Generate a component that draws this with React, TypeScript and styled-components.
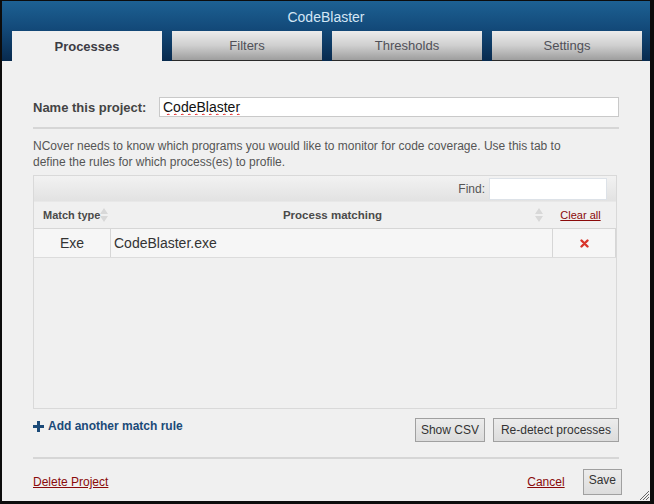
import React from 'react';
import styled, { createGlobalStyle } from 'styled-components';

const GlobalStyle = createGlobalStyle`
  html, body {
    margin: 0;
    padding: 0;
    background: #111;
  }
  body {
    font-family: 'Liberation Sans', Arial, sans-serif;
  }
`;

const tabs = ['Processes', 'Filters', 'Thresholds', 'Settings'];

export default function App() {
  return (
    <>
      <GlobalStyle />
      <Window>
        <TitleBar>
          <Title>CodeBlaster</Title>
          <TabRow>
            {tabs.map((t, i) => (
              <Tab key={t} active={i === 0}>
                {t}
              </Tab>
            ))}
          </TabRow>
        </TitleBar>
        <Content>
          <NameRow>
            <NameLabel>Name this project:</NameLabel>
            <NameInput defaultValue="CodeBlaster" />
          </NameRow>
          <Rule />
          <Intro>
            NCover needs to know which programs you would like to monitor for code coverage. Use this tab to
            <br />
            define the rules for which process(es) to profile.
          </Intro>
          <TableBox>
            <Toolbar>
              <FindLabel>Find:</FindLabel>
              <FindInput />
            </Toolbar>
            <HeadRow>
              <TypeHead>
                Match type
                <SortIcon />
              </TypeHead>
              <ProcessHead>
                Process matching
                <SortIcon />
              </ProcessHead>
              <ClearHead>
                <RedLink href="#">Clear all</RedLink>
              </ClearHead>
            </HeadRow>
            <DataRow>
              <TypeCell>Exe</TypeCell>
              <ProcessCell>CodeBlaster.exe</ProcessCell>
              <RemoveCell>
                <RemoveIcon />
              </RemoveCell>
            </DataRow>
          </TableBox>
          <ActionRow>
            <AddLink href="#">
              <PlusIcon />
              Add another match rule
            </AddLink>
            <ButtonGroup>
              <Button>Show CSV</Button>
              <Button wide>Re-detect processes</Button>
            </ButtonGroup>
          </ActionRow>
          <Rule />
          <Footer>
            <RedLink href="#" size={12}>Delete Project</RedLink>
            <FooterRight>
              <RedLink href="#" size={12}>Cancel</RedLink>
              <SaveButton>Save</SaveButton>
            </FooterRight>
          </Footer>
          <Grip />
        </Content>
      </Window>
    </>
  );
}

function SortIcon() {
  return (
    <SortSvg width="8" height="16" viewBox="0 0 8 16">
      <path d="M4 1 L8 7 L0 7 Z" fill="#d8d8d8" />
      <path d="M4 15 L8 9 L0 9 Z" fill="#d8d8d8" />
    </SortSvg>
  );
}

function RemoveIcon() {
  return (
    <svg width="9" height="9" viewBox="0 0 9 9">
      <path d="M1.5 1.5 L7.5 7.5 M7.5 1.5 L1.5 7.5" stroke="#d8342a" strokeWidth="2.4" strokeLinecap="round" />
    </svg>
  );
}

function PlusIcon() {
  return (
    <svg width="11" height="11" viewBox="0 0 11 11">
      <path d="M4 0 H7 V4 H11 V7 H7 V11 H4 V7 H0 V4 H4 Z" fill="#1b4a78" />
    </svg>
  );
}

function Grip() {
  return (
    <GripSvg width="12" height="12" viewBox="0 0 12 12">
      <path d="M11 2 L2 11 M11 5 L5 11 M11 8 L8 11" stroke="#666" strokeWidth="1" />
    </GripSvg>
  );
}

const Window = styled.div`
  width: 654px;
  height: 504px;
  box-sizing: border-box;
  border-style: solid;
  border-color: #0c0c0c;
  border-width: 1px 4px 3px 2px;
  display: flex;
  flex-direction: column;
  background: #f0f0f0;
`;

const TitleBar = styled.div`
  background: linear-gradient(#1d6193 0%, #134a7a 45%, #082a4e 100%);
  padding: 0 0 0 10px;
  display: flex;
  flex-direction: column;
`;

const Title = styled.div`
  height: 30px;
  line-height: 32px;
  text-align: center;
  color: #d4e6f5;
  font-size: 14px;
  padding-right: 10px;
`;

const TabRow = styled.div`
  display: flex;
  gap: 10px;
`;

const Tab = styled.div<{ active?: boolean }>`
  width: 150px;
  height: 30px;
  box-sizing: border-box;
  display: flex;
  align-items: center;
  justify-content: center;
  font-size: 13px;
  color: ${({ active }) => (active ? '#3c3c44' : '#505058')};
  font-weight: ${({ active }) => (active ? 'bold' : 'normal')};
  background: ${({ active }) =>
    active ? '#f0f0f0' : 'linear-gradient(#ececec 0%, #cfcfcf 50%, #9e9e9e 100%)'};
  border-bottom: ${({ active }) => (active ? 'none' : '1px solid #2a2a2a')};
`;

const Content = styled.div`
  position: relative;
  flex: 1;
  padding: 36px 31px 0 31px;
  display: flex;
  flex-direction: column;
`;

const NameRow = styled.div`
  display: flex;
  align-items: center;
  height: 20px;
`;

const NameLabel = styled.label`
  width: 126px;
  font-size: 13px;
  font-weight: bold;
  color: #444;
`;

const NameInput = styled.input`
  flex: 1;
  height: 20px;
  box-sizing: border-box;
  border: 1px solid #c9c9c9;
  background: #fff;
  padding: 0 3px;
  font-family: 'Liberation Sans', Arial, sans-serif;
  font-size: 14px;
  color: #111;
  text-decoration: underline wavy #e01010;
  text-decoration-thickness: 1px;
  outline: none;
`;

const Rule = styled.div`
  height: 0;
  border-top: 2px solid #d6d6d6;
  margin: 10px 0 0 0;
`;

const Intro = styled.p`
  margin: 9px 0 5px;
  font-size: 12px;
  line-height: 16px;
  color: #555;
`;

const TableBox = styled.div`
  height: 232px;
  margin-right: 2px;
  border: 1px solid #d9d9d9;
  background: #f0f0f0;
  display: flex;
  flex-direction: column;
`;

const Toolbar = styled.div`
  height: 25px;
  display: flex;
  align-items: center;
  justify-content: flex-end;
  padding-right: 9px;
  background: linear-gradient(#f2f2f2, #e2e2e2);
  border-bottom: 1px solid #e8e8e8;
`;

const FindLabel = styled.span`
  font-size: 12px;
  color: #555;
  margin-right: 4px;
`;

const FindInput = styled.input`
  width: 118px;
  height: 22px;
  box-sizing: border-box;
  border: 1px solid #dde2e8;
  background: #fff;
  outline: none;
`;

const HeadRow = styled.div`
  height: 26px;
  display: flex;
  align-items: center;
  border-bottom: 1px solid #d6d6d6;
  font-size: 11px;
  font-weight: bold;
  color: #4a4a4a;
`;

const TypeHead = styled.div`
  width: 76px;
  box-sizing: border-box;
  padding-left: 9px;
  display: flex;
  align-items: center;
`;

const ProcessHead = styled.div`
  flex: 1;
  position: relative;
  display: flex;
  justify-content: center;
  align-items: center;
  padding-left: 6px;
  font-size: 11.5px;
`;

const SortSvg = styled.svg`
  margin-left: 0;
  ${ProcessHead} & {
    position: absolute;
    right: 6px;
  }
`;

const ClearHead = styled.div`
  width: 63px;
  display: flex;
  justify-content: center;
  padding-right: 4px;
`;

const RedLink = styled.a<{ size?: number }>`
  color: #8a0a0a;
  font-size: ${({ size }) => size ?? 11}px;
  font-weight: normal;
  text-decoration: underline;
`;

const DataRow = styled.div`
  height: 28px;
  display: flex;
  background: #f6f6f6;
  border-bottom: 1px solid #dcdcdc;
  font-size: 14px;
  color: #333;
`;

const TypeCell = styled.div`
  width: 76px;
  display: flex;
  align-items: center;
  justify-content: center;
  border-right: 1px solid #d6d6d6;
`;

const ProcessCell = styled.div`
  flex: 1;
  display: flex;
  align-items: center;
  padding-left: 3px;
`;

const RemoveCell = styled.div`
  width: 62px;
  display: flex;
  align-items: center;
  justify-content: center;
  border-left: 1px solid #d6d6d6;
  border-right: 1px solid #d6d6d6;
`;

const ActionRow = styled.div`
  display: flex;
  align-items: flex-start;
  justify-content: space-between;
  margin-top: 9px;
  height: 23px;
  margin-bottom: 6px;
`;

const AddLink = styled.a`
  display: flex;
  align-items: center;
  gap: 4px;
  margin-top: 1px;
  font-size: 12px;
  font-weight: bold;
  color: #1b4a78;
  text-decoration: none;
`;

const ButtonGroup = styled.div`
  display: flex;
  gap: 8px;
`;

const Button = styled.button<{ wide?: boolean }>`
  height: 24px;
  padding: 0 ${({ wide }) => (wide ? 7 : 5)}px;
  border: 1px solid #a0a0a0;
  background: linear-gradient(#ececec, #dcdcdc);
  font-family: 'Liberation Sans', Arial, sans-serif;
  font-size: 12px;
  color: #333;
`;

const Footer = styled.div`
  display: flex;
  justify-content: space-between;
  align-items: center;
  margin-top: 10px;
`;

const FooterRight = styled.div`
  display: flex;
  align-items: center;
  gap: 18px;
`;

const SaveButton = styled(Button)`
  height: 26px;
  padding: 0 5px 4px;
  margin-right: -3px;
`;

const GripSvg = styled.svg`
  position: absolute;
  right: 0;
  bottom: 0;
`;
